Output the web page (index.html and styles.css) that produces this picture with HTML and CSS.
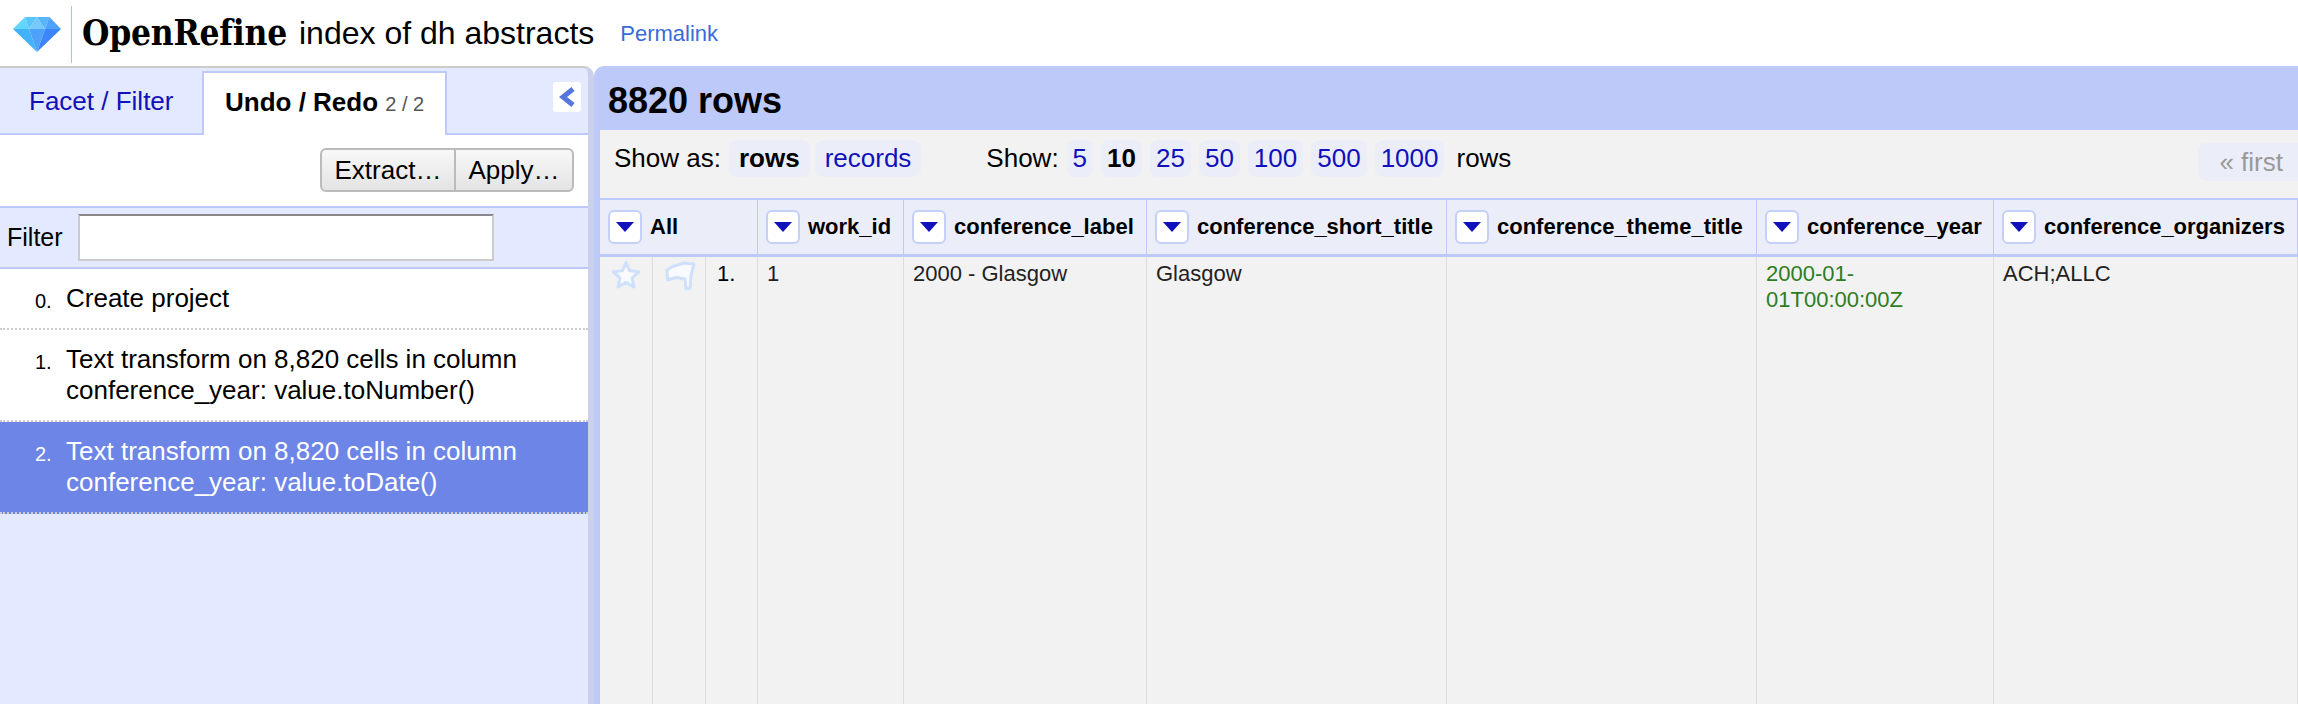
FILE: index.html
```html
<!DOCTYPE html>
<html lang="en">
<head>
<meta charset="utf-8">
<title>index of dh abstracts - OpenRefine</title>
<link rel="stylesheet" href="styles.css">
</head>
<body>
<header class="header">
  <svg class="logo" viewBox="0 0 48 36" width="48" height="36" aria-hidden="true">
    <polygon points="0,12 12,0 16,12" fill="#62d6fd"/>
    <polygon points="12,0 24,0 16,12" fill="#58c6fb"/>
    <polygon points="16,12 24,0 32,12" fill="#74c8fa"/>
    <polygon points="24,0 36.5,0 32,12" fill="#57b6fb"/>
    <polygon points="36.5,0 48,12 32,12" fill="#4fa2fb"/>
    <polygon points="0,12 16,12 24,35" fill="#43b2fa"/>
    <polygon points="16,12 32,12 24,35" fill="#4da3fc"/>
    <polygon points="32,12 48,12 24,35" fill="#3d85fb"/>
  </svg>
  <div class="brand">OpenRefine</div>
  <div class="project">index of dh abstracts</div>
  <a class="permalink">Permalink</a>
</header>
<main class="main">
  <aside class="left">
    <div class="tabs">
      <span class="tab">Facet / Filter</span>
      <span class="tab tab-active">Undo / Redo <span class="count">2 / 2</span></span>
      <span class="collapse"><svg viewBox="0 0 17 20" width="17" height="20" aria-hidden="true"><path d="M14 2 L4 10 L14 18" fill="none" stroke="#5577dd" stroke-width="5"/></svg></span>
    </div>
    <div class="actions">
      <button class="btn btn-l">Extract…</button><button class="btn btn-r">Apply…</button>
    </div>
    <div class="filter">
      <label class="filter-label">Filter</label>
      <input class="filter-input" type="text">
    </div>
    <ol class="history">
      <li class="entry"><span class="num">0.</span><span>Create project</span></li>
      <li class="entry"><span class="num">1.</span><span>Text transform on 8,820 cells in column<br>conference_year: value.toNumber()</span></li>
      <li class="entry entry-now"><span class="num">2.</span><span>Text transform on 8,820 cells in column<br>conference_year: value.toDate()</span></li>
    </ol>
  </aside>
  <section class="view">
    <h1 class="rows-title">8820 rows</h1>
    <div class="bar">
      <span class="bar-label">Show as:</span>
      <span class="pill pill-mode pill-on">rows</span>
      <span class="pill pill-mode">records</span>
      <span class="bar-label show">Show:</span>
      <span class="pill">5</span>
      <span class="pill pill-on">10</span>
      <span class="pill">25</span>
      <span class="pill">50</span>
      <span class="pill">100</span>
      <span class="pill">500</span>
      <span class="pill pill-last">1000</span>
      <span class="bar-label">rows</span>
      <span class="first">« first</span>
    </div>
    <table class="grid">
      <colgroup>
        <col class="c-star"><col class="c-flag"><col class="c-num"><col class="c-id"><col class="c-label"><col class="c-short"><col class="c-theme"><col class="c-year"><col class="c-org">
      </colgroup>
      <thead>
        <tr>
          <th colspan="3"><div class="th"><span class="drop"></span>All</div></th>
          <th><div class="th"><span class="drop"></span>work_id</div></th>
          <th><div class="th"><span class="drop"></span>conference_label</div></th>
          <th><div class="th"><span class="drop"></span>conference_short_title</div></th>
          <th><div class="th"><span class="drop"></span>conference_theme_title</div></th>
          <th><div class="th"><span class="drop"></span>conference_year</div></th>
          <th><div class="th"><span class="drop"></span>conference_organizers</div></th>
        </tr>
      </thead>
      <tbody>
        <tr>
          <td class="icon"><svg viewBox="0 0 30 30" width="30" height="30" aria-hidden="true"><path d="M15 2.5 L18.6 10.8 L27.8 11.8 L21 18 L23 27 L15 22.4 L7 27 L9 18 L2.2 11.8 L11.4 10.8 Z" fill="#f9fafe" stroke="#cfe0fb" stroke-width="3" stroke-linejoin="round"/></svg></td>
          <td class="icon"><svg viewBox="0 0 32 32" width="32" height="32" aria-hidden="true"><path d="M3 10 L8.5 6.5 L20 3 L30 4 L27 15 L26 28.5 L22 29 L21 19 L12 17.5 L3.5 20 Z" fill="#f9fafe" stroke="#cfe0fb" stroke-width="3" stroke-linejoin="round"/></svg></td>
          <td class="rownum">1.</td>
          <td>1</td>
          <td>2000 - Glasgow</td>
          <td>Glasgow</td>
          <td></td>
          <td class="date">2000-01-<br>01T00:00:00Z</td>
          <td>ACH;ALLC</td>
        </tr>
      </tbody>
    </table>
  </section>
</main>
</body>
</html>
```
FILE: styles.css
```css
* { box-sizing: border-box; }
html, body { margin: 0; height: 100%; }
body {
  width: 2298px; height: 704px; overflow: hidden;
  font-family: "Liberation Sans", Arial, sans-serif;
  color: #000; background: #fff;
  display: flex; flex-direction: column;
}
.header { height: 66px; display: flex; align-items: flex-start; padding: 17px 0 0 13px; flex: none; }
.logo { flex: none; }
.brand {
  margin: -11px 0 0 10px; padding-left: 10px; height: 57px; line-height: 54px;
  border-left: 1px solid #a9bcf5;
  font-family: "DejaVu Serif Condensed", "DejaVu Serif", serif; font-weight: 700; font-size: 35px; letter-spacing: -.2px;
}
.project { margin: -11px 0 0 12px; font-size: 32px; line-height: 54px; }
.permalink { margin: -1px 0 0 26px; font-size: 22px; line-height: 36px; color: #3a6bd9; }
.main { flex: 1; display: flex; min-height: 0; }
.left {
  width: 594px; flex: none; background: #e3e9ff;
  border-top: 2px solid #ccc; border-right: 6px solid #c9d1ec; border-top-right-radius: 10px;
  display: flex; flex-direction: column;
}
.tabs {
  height: 67px; flex: none; display: flex; align-items: flex-end; position: relative;
  border-bottom: 2px solid #bcc9f9; padding-left: 29px;
}
.tab { font-size: 26px; color: #1111bb; height: 54px; line-height: 45px; width: 173px; flex: none; }
.tab-active {
  background: #fff; color: #000; font-weight: 700; width: 245px; height: 64px;
  border: 2px solid #bcc9f9; border-bottom: 0; padding-left: 21px; margin-bottom: -2px;
  line-height: 58px; white-space: nowrap;
}
.count { font-weight: 400; font-size: 20px; color: #555; }
.collapse {
  position: absolute; left: 553px; top: 14px; width: 28px; height: 30px; background: #fff; border-radius: 3px;
  display: flex; align-items: center; justify-content: center;
}
.actions { height: 71px; flex: none; background: #fff; display: flex; justify-content: flex-end; align-items: flex-start; padding: 13px 14px 0 0; }
.btn {
  height: 44px; font: 26px "Liberation Sans", Arial, sans-serif; color: #000; padding: 0;
  border: 2px solid #bbb; background: linear-gradient(#f8f8f8, #e4e4e4);
}
.btn-l { width: 136px; border-radius: 6px 0 0 6px; }
.btn-r { width: 118px; border-left: 0; border-radius: 0 6px 6px 0; }
.filter {
  height: 63px; flex: none; display: flex; align-items: center; padding: 0 0 0 7px;
  border-top: 2px solid #bcc9f9; border-bottom: 2px solid #bcc9f9;
}
.filter-label { font-size: 25px; width: 71px; }
.filter-input { width: 416px; height: 47px; background: #fff; border: 2px solid #ccc; border-top-color: #888; padding: 0; }
.history { list-style: none; margin: 0; padding: 0; }
.entry {
  background: #fff; display: flex; font-size: 26px; line-height: 31px; padding: 14px 20px 14px 35px;
  border-bottom: 2px dotted #ccc;
}
.entry-now { background: #6d85e6; color: #fff; }
.num { width: 31px; flex: none; font-size: 20px; line-height: 26px; padding-top: 5px; }
.view {
  flex: 1; min-width: 0; background: #bcc9f9; border-top-left-radius: 10px;
  padding-left: 6px; display: flex; flex-direction: column;
}
.rows-title { margin: 0; height: 64px; flex: none; font-size: 36px; line-height: 70px; padding-left: 8px; font-weight: 700; }
.bar {
  height: 68px; flex: none; background: #f2f2f2; display: flex; align-items: flex-start; padding: 10px 0 0 14px;
  font-size: 26px; line-height: 37px; position: relative;
}
.bar-label { margin-right: 8px; }
.show { margin-left: 60px; }
.pill { background: #ebeef8; color: #1111bb; border-radius: 8px; padding: 0 6px; margin-right: 8px; height: 37px; }
.pill-mode { padding: 0 10px; margin-right: 5px; }
.pill-last { margin-right: 12px; }
.pill-on { color: #000; font-weight: 700; }
.first {
  position: absolute; right: 0; top: 13px; background: #ebeef8; color: #999; height: 38px; line-height: 38px;
  border-radius: 8px 0 0 8px; padding: 0 15px 0 21px;
}
.grid { flex: 1; width: 1698px; table-layout: fixed; border-collapse: separate; border-spacing: 0; background: #f2f2f2; }
.c-star { width: 53px; } .c-flag { width: 53px; } .c-num { width: 52px; }
.c-id { width: 146px; } .c-label { width: 243px; } .c-short { width: 300px; }
.c-theme { width: 310px; } .c-year { width: 237px; } .c-org { width: 304px; }
.grid th {
  height: 59px; padding: 0 0 0 8px; background: #ebeef8; text-align: left; white-space: nowrap;
  font-size: 22px; border-top: 2px solid #bcc9f9; border-bottom: 3px solid #bcc9f9; border-right: 1px solid #bcc9f9;
}
.th { display: flex; align-items: center; gap: 8px; }
.drop {
  width: 34px; height: 34px; flex: none; background: #fff; border: 2px solid #c4d0f8; border-radius: 6px;
  display: flex; align-items: center; justify-content: center;
}
.drop::after { content: ""; border: 9px solid transparent; border-top: 10px solid #1111bb; border-bottom: 0; }
.grid td {
  vertical-align: top; padding: 4px 0 0 9px; font-size: 22px; line-height: 26px; color: #222;
  border-right: 1px solid #ddd;
}
.grid tbody tr { height: 100%; }
.grid td.icon { padding: 3px 0 0 11px; }
.grid td.rownum { color: #000; padding-left: 11px; }
.grid td.date { color: #2e7d1e; }
```
